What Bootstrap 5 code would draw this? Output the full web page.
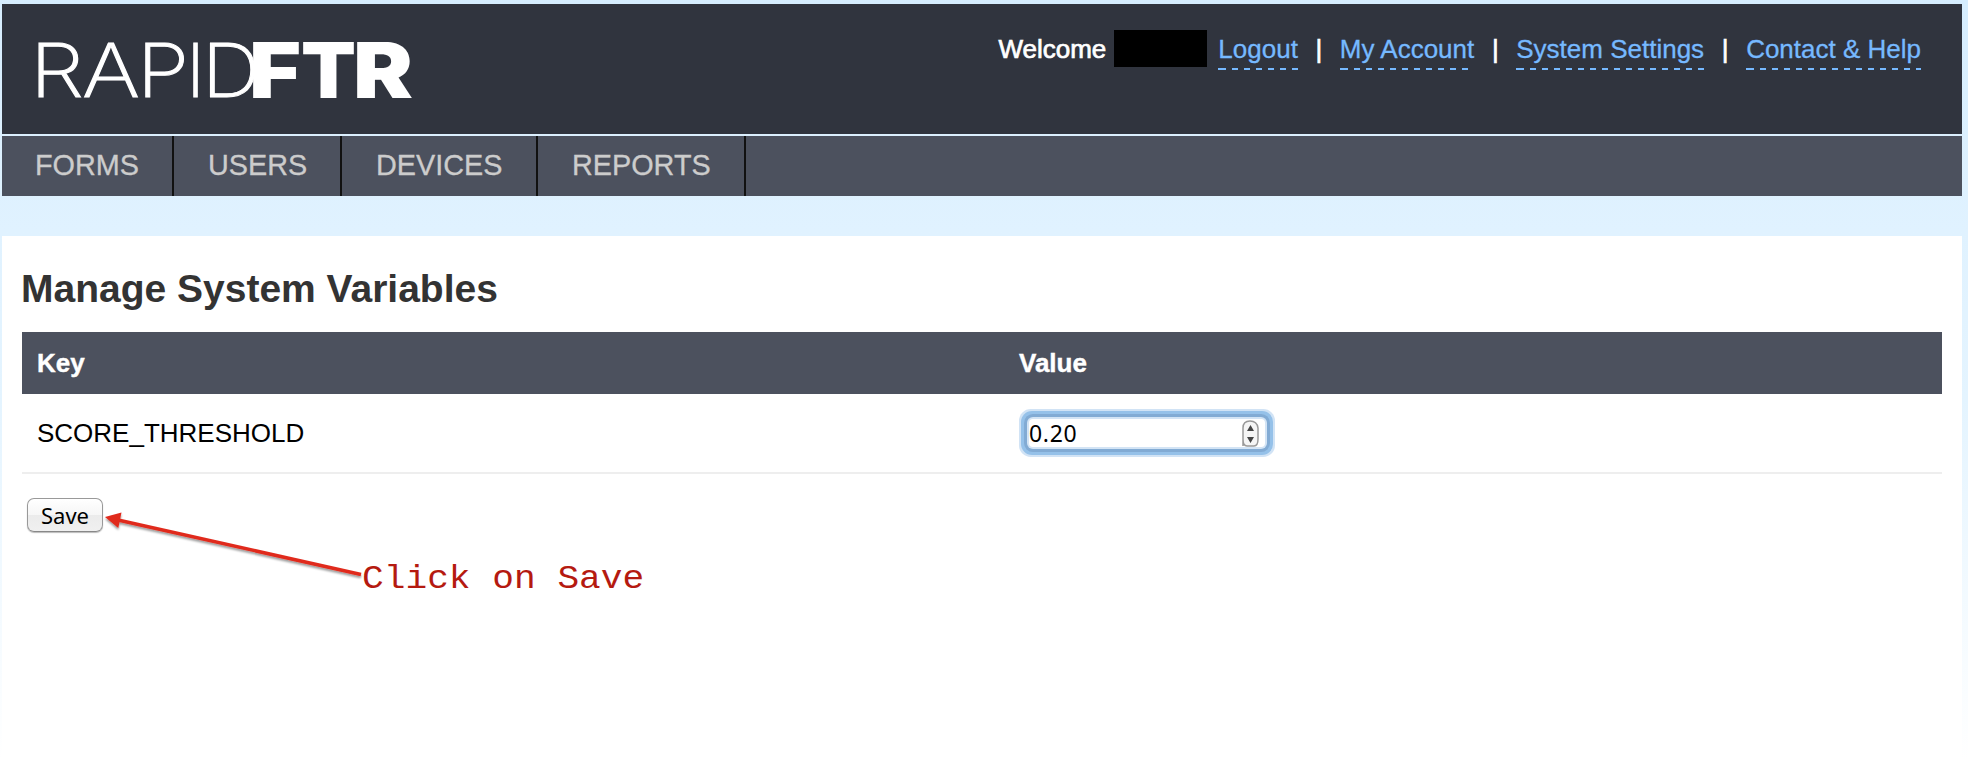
<!DOCTYPE html>
<html lang="en">
<head>
<meta charset="utf-8">
<title>RapidFTR - Manage System Variables</title>
<link href="https://cdn.jsdelivr.net/npm/bootstrap@5.3.0/dist/css/bootstrap.min.css" rel="stylesheet">
<style>
body{font-family:"Liberation Sans",Arial,sans-serif;font-size:26px;line-height:30px;color:#000;height:770px;overflow:hidden;padding:4px 6px 0 2px;background:linear-gradient(#d6edfe 0,#e0f2ff 230px,#e4f4ff 400px,#fff 760px) no-repeat #fff}
.site-head{height:130px;background:#30343e;padding:26px 41px 0 32px;margin-bottom:2px}
.logo{width:390px;height:70px;display:block;overflow:visible}
.user-links{-webkit-text-stroke:.3px;height:40px;color:#fff}
.user-links a{color:#76b9ff;text-decoration:none;height:40px;padding-top:4px}
.user-links .dashes{background:linear-gradient(#76b9ff,#76b9ff) 0 100%/2px 2px no-repeat,linear-gradient(90deg,transparent 2px,#76b9ff 2px 8px,transparent 8px) 0 100%/12px 2px repeat-x}
.user-links .dashes{background:linear-gradient(#76b9ff,#76b9ff) 0 100%/2px 2px no-repeat,linear-gradient(90deg,transparent 0 2px,#76b9ff 2px 8px,transparent 8px 12px) 0 100%/12px 2px repeat-x}
.sep{width:42px;text-align:center;padding-top:4px;-webkit-text-stroke:.7px}
.hello{padding-top:4px;-webkit-text-stroke:.7px}
.redacted{width:93px;height:37px;background:#000;margin:0 11px 0 8px}
.main-tabs{height:60px;background:#4c515e;margin-bottom:40px}
.main-tabs a{font-size:28.8px;line-height:59px;color:#ccc;text-decoration:none;padding-left:34px;border-right:2px solid #111;-webkit-text-stroke:.3px;white-space:nowrap}
.main-tabs .w1{width:172px;padding-left:33px}.w2{width:168px}.w3{width:196px}.w4{width:208px}
.sheet{height:534px;background:#fff;padding:31px 20px 0}
h1{font-size:39px;line-height:44px;font-weight:700;color:#333;margin:0 0 21px -1px}
.vars{table-layout:fixed;width:1920px;margin:0 0 24px;border-collapse:separate;border-spacing:0}
.vars th{height:62px;background:#4c515e;color:#fff;padding:0 15px;-webkit-text-stroke:.4px;vertical-align:middle}
.vars td{height:80px;border-bottom:2px solid #eee;padding:0 15px;vertical-align:middle}
.num{font-family:"Noto Sans","Lucida Grande",sans-serif;font-size:23px;letter-spacing:.7px;line-height:28px;width:236px;height:28px;margin:0 0 0 10px;background:#fff;box-shadow:0 0 0 2px #d3e4f5,0 0 0 5px #82abd4,0 0 0 8px #95c1e9,0 0 0 10px #d1e3f5}
.save{font-family:"Noto Sans","Lucida Grande",sans-serif;font-size:22px;line-height:30px;width:76px;height:34px;margin-left:5px;padding:0 0 1px;border:1.5px solid #999;border-bottom-color:#888;border-radius:7px;background:linear-gradient(#fff 0,#f6f6f6 50%,#ebebeb 51%,#f0f0f0 100%);box-shadow:0 1px 1px #bbb;color:#000}
.note{left:76px;top:6px;width:560px;height:90px;overflow:visible}
</style>
</head>
<body>
<header class="site-head d-flex justify-content-between align-items-start">
 <svg class="logo" viewBox="34 30 390 70" fill="#fff" aria-label="RapidFTR">
  <g font-family="Inter,sans-serif">
   <g font-weight="200" font-size="74.5" stroke="#fff" stroke-width="1">
    <text x="30" y="97" textLength="54" lengthAdjust="spacingAndGlyphs">R</text>
    <text x="82" y="97" textLength="58" lengthAdjust="spacingAndGlyphs">A</text>
    <text x="137" y="97" textLength="52" lengthAdjust="spacingAndGlyphs">P</text>
    <text x="186" y="97">I</text>
    <text x="202" y="97" textLength="58" lengthAdjust="spacingAndGlyphs">D</text>
   </g>
   <g font-weight="900" font-size="77">
    <text x="249" y="98" textLength="52" lengthAdjust="spacingAndGlyphs">F</text>
    <text x="301" y="98" textLength="55" lengthAdjust="spacingAndGlyphs">T</text>
    <text x="353" y="98" textLength="60" lengthAdjust="spacingAndGlyphs">R</text>
   </g>
  </g>
 </svg>
 <div class="user-links d-flex">
  <span class="hello">Welcome</span><span class="redacted"></span>
  <a href="#" class="dashes">Logout</a><span class="sep">|</span>
  <a href="#" class="dashes">My Account</a><span class="sep">|</span>
  <a href="#" class="dashes">System Settings</a><span class="sep">|</span>
  <a href="#" class="dashes">Contact &amp; Help</a>
 </div>
</header>
<nav class="main-tabs d-flex">
 <a href="#" class="w1">FORMS</a><a href="#" class="w2">USERS</a><a href="#" class="w3">DEVICES</a><a href="#" class="w4">REPORTS</a>
</nav>
<main class="sheet">
 <h1>Manage System Variables</h1>
 <table class="vars">
  <colgroup><col style="width:982px"><col></colgroup>
  <thead><tr><th>Key</th><th>Value</th></tr></thead>
  <tbody><tr><td>SCORE_THRESHOLD</td><td>
   <div class="num d-flex justify-content-between rounded-1"><span>0.20</span>
    <svg width="24" height="28" viewBox="0 0 24 28"><path d="M2 27V9Q2 2 9 2T17 9V20Q17 27 13 27H6Q2 27 2 20Z" fill="#f5f5f5" stroke="#999" stroke-width="1.5"/><path d="M6 12 9.500 6 13 12ZM6 18H13L9.500 24Z" fill="#444"/></svg>
   </div></td></tr></tbody>
 </table>
 <div class="position-relative d-flex">
  <button class="save" type="button">Save</button>
  <svg class="note position-absolute" viewBox="98 504 560 90">
   <defs><filter id="soft" x="-10%" y="-10%" width="120%" height="130%"><feDropShadow dx="0" dy="2" stdDeviation="1.2" flood-opacity=".4"/></filter></defs>
   <g filter="url(#soft)"><path d="M118 520 361 574.500" stroke="#e02a1c" stroke-width="3.500" fill="none"/><path d="M105 517 121.500 512.500 118.300 528Z" fill="#e02a1c"/></g>
   <text transform="translate(362 588) scale(1 .93)" font-family="'Liberation Mono','Courier New',monospace" font-size="36.200" fill="#b51a10">Click on Save</text>
  </svg>
 </div>
</main>
<script src="https://cdn.jsdelivr.net/npm/bootstrap@5.3.0/dist/js/bootstrap.bundle.min.js"></script>
</body>
</html>
